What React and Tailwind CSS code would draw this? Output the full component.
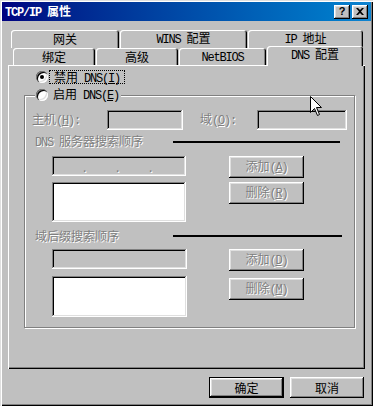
import React from 'react';

// Latin runs use a half-width mono face, like the bitmap SimSun look
const L = ({ children }) => (
  <span className="font-['Liberation_Mono',monospace] tracking-[-1.2px]">{children}</span>
);

const raised = "bg-[#c0c0c0] shadow-[inset_-1px_-1px_#000,inset_1px_1px_#fff,inset_-2px_-2px_#808080,inset_2px_2px_#dfdfdf]";
const sunken = "shadow-[inset_-1px_-1px_#fff,inset_1px_1px_#808080,inset_-2px_-2px_#dfdfdf,inset_2px_2px_#000]";
const dim = "text-[#808080] [text-shadow:1px_1px_0_#fff]";
const tabCls = "flex items-center justify-center rounded-t-[3px] bg-[#c0c0c0] shadow-[inset_1px_1px_#fff,inset_-1px_0_#000,inset_-2px_0_#808080]";

const Radio = ({ checked }) => (
  <div className="w-[12px] h-[12px] shrink-0 rounded-full bg-white shadow-[inset_1px_1px_#808080,inset_2px_2px_#000,inset_-1px_-1px_#fff,inset_-2px_-2px_#dfdfdf] flex items-center justify-center">
    {checked && <div className="w-[4px] h-[4px] rounded-full bg-black" />}
  </div>
);

const Btn = ({ children }) => (
  <div className={`h-[22px] ${raised} flex items-center justify-center ${dim}`}>
    <span>{children}</span>
  </div>
);

const Tab = ({ className, children }) => (
  <div className={`${tabCls} ${className}`}>
    <span>{children}</span>
  </div>
);

export default function App() {
  return (
    <div className="relative w-[373px] h-[406px] overflow-hidden bg-[#c0c0c0] pt-[2px] font-['Noto_Sans_CJK_SC',sans-serif] text-[12px] leading-[14px] text-black shadow-[inset_1px_1px_#dfdfdf,inset_2px_2px_#fff,inset_-1px_-1px_#000,inset_-2px_-2px_#808080]">
      {/* Title bar */}
      <div className="mx-[2px] h-[19px] flex items-center bg-linear-to-r from-[#000080] to-[#1084d0] px-[3px]">
        <span className="text-white font-bold">
          <L>TCP/IP </L>属性
        </span>
        <div className="ml-auto flex gap-[2px]">
          <div className={`w-[16px] h-[14px] ${raised} flex items-center justify-center font-['Liberation_Sans',sans-serif] font-bold text-[11px] leading-none`}>?</div>
          <div className={`w-[16px] h-[14px] ${raised} flex items-center justify-center`}>
            <svg width="8" height="7" viewBox="0 0 8 7">
              <path d="M0 0h2l2 2 2-2h2L5 3.5 8 7H6L4 5 2 7H0l3-3.5z" fill="#000" />
            </svg>
          </div>
        </div>
      </div>

      {/* Tabs, back row */}
      <div className="mt-[9px] ml-[11px] flex gap-[1px] h-[18px]">
        <Tab className="w-[108px]">网关</Tab>
        <Tab className="w-[127px]"><L>WINS </L>配置</Tab>
        <Tab className="w-[115px]"><L>IP </L>地址</Tab>
      </div>
      {/* Tabs, front row */}
      <div className="ml-[13px] flex items-end gap-[1px] h-[17px]">
        <Tab className="w-[82px] h-[17px]">绑定</Tab>
        <Tab className="w-[82px] h-[17px]">高级</Tab>
        <Tab className="w-[87px] h-[17px]"><L>NetBIOS</L></Tab>
        <Tab className="relative z-10 w-[96px] h-[20px] -mb-[1px] pb-[3px]"><L>DNS </L>配置</Tab>
      </div>

      {/* Tab panel */}
      <div className="ml-[8px] w-[357px] h-[304px] pt-[5px] shadow-[inset_1px_1px_#fff,inset_-1px_-1px_#000,inset_-2px_-2px_#808080]">
        <div className="ml-[28px] h-[14px] flex items-center">
          <Radio checked />
          <span className="ml-[1px] h-[14px] px-[4px] border border-dotted border-black leading-[12px]">
            禁用<L> DNS(<u>I</u>)</L>
          </span>
        </div>

        {/* Group box */}
        <div className="mt-[11px] ml-[16px] w-[331px] h-[233px] border border-[#808080] shadow-[inset_1px_1px_#fff,1px_1px_#fff]">
          <div className="-mt-[8px] ml-[10px] w-fit h-[14px] flex items-center bg-[#c0c0c0] px-[1px]">
            <Radio />
            <span className="ml-[5px] pr-[1px]">启用<L> DNS(<u>E</u>)</L></span>
          </div>

          <div className="mt-[8px] flex items-center h-[20px]">
            <span className={`ml-[7px] w-[75px] ${dim}`}>主机<L>(<u>H</u>):</L></span>
            <div className={`w-[76px] h-[20px] ${sunken}`} />
            <span className={`ml-[17px] w-[57px] ${dim}`}>域<L>(<u>O</u>):</L></span>
            <div className={`w-[90px] h-[20px] ${sunken}`} />
          </div>

          <div className="mt-[5px] h-[14px] flex items-center">
            <span className={`ml-[10px] w-[138px] ${dim}`}><L>DNS </L>服务器搜索顺序</span>
            <div className="w-[167px] h-[2px] bg-black" />
          </div>

          <div className="mt-[7px] flex">
            <div className="ml-[27px] w-[134px] flex flex-col">
              <div className={`h-[20px] ${sunken} flex items-end px-[2px] pb-[2px] ${dim}`}>
                <span className="w-[29px]" />
                <span className="w-[4px]">.</span>
                <span className="w-[29px]" />
                <span className="w-[4px]">.</span>
                <span className="w-[29px]" />
                <span className="w-[4px]">.</span>
              </div>
              <div className={`mt-[6px] h-[40px] bg-white ${sunken}`} />
            </div>
            <div className="ml-[43px] w-[75px] flex flex-col gap-[4px]">
              <Btn>添加<L>(<u>A</u>)</L></Btn>
              <Btn>删除<L>(<u>R</u>)</L></Btn>
            </div>
          </div>

          <div className="mt-[7px] h-[14px] flex items-center">
            <span className={`ml-[10px] w-[138px] ${dim}`}>域后缀搜索顺序</span>
            <div className="w-[169px] h-[2px] bg-black" />
          </div>

          <div className="mt-[6px] flex">
            <div className="ml-[27px] w-[135px] flex flex-col">
              <div className={`h-[20px] ${sunken}`} />
              <div className={`mt-[7px] h-[41px] bg-white ${sunken}`} />
            </div>
            <div className="ml-[42px] w-[75px] flex flex-col gap-[7px]">
              <Btn>添加<L>(<u>D</u>)</L></Btn>
              <Btn>删除<L>(<u>M</u>)</L></Btn>
            </div>
          </div>
        </div>
      </div>

      {/* Dialog buttons */}
      <div className="mt-[8px] flex justify-end gap-[6px] pr-[9px]">
        <div className={`w-[75px] h-[21px] border border-black ${raised} flex items-center justify-center`}>确定</div>
        <div className={`w-[74px] h-[21px] ${raised} flex items-center justify-center`}>取消</div>
      </div>

      {/* Mouse pointer */}
      <svg className="absolute left-[310px] top-[96px]" width="13" height="21" viewBox="0 0 13 21">
        <path d="M0.5 0.5V16.5L4.5 12.5L7.5 19.5L9.5 18.5L6.5 11.5H11.5Z" fill="#fff" stroke="#000" strokeWidth="1" />
      </svg>
    </div>
  );
}
